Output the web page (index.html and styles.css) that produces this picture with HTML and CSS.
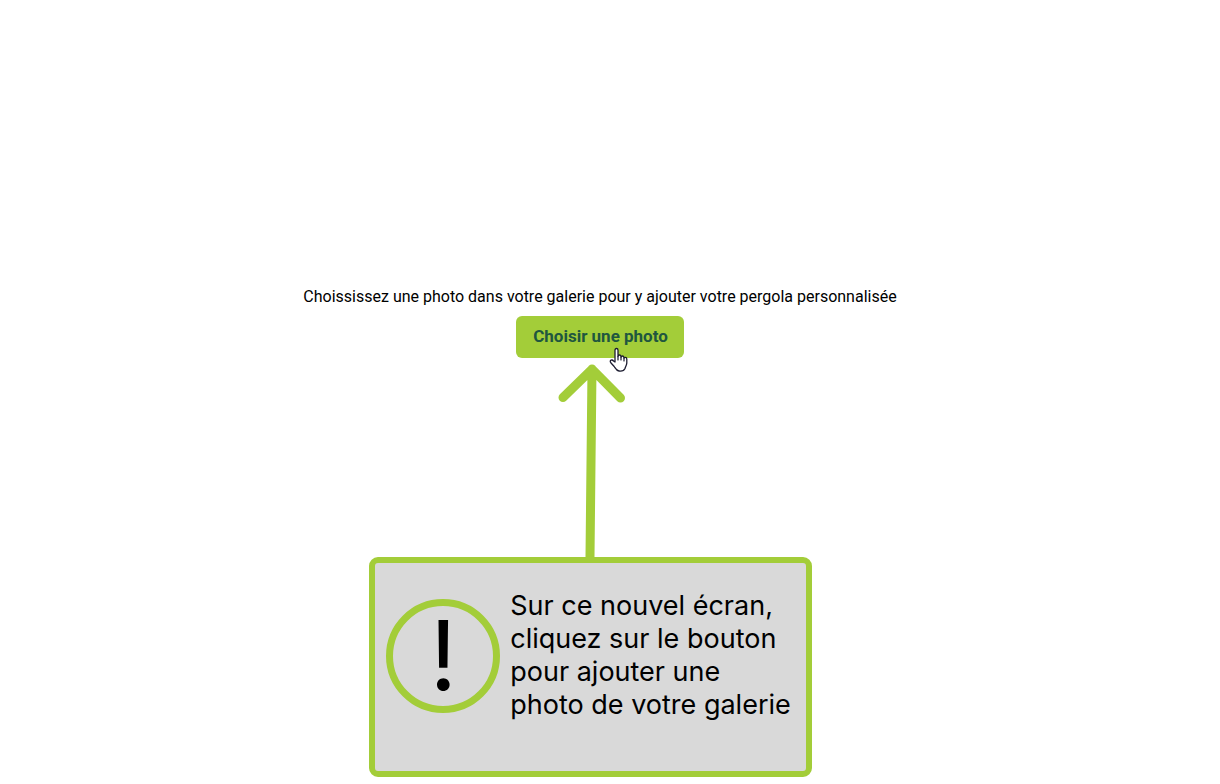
FILE: index.html
```html
<!DOCTYPE html>
<html lang="fr">
<head>
<meta charset="utf-8">
<meta name="viewport" content="width=device-width, initial-scale=1">
<title>Choisir une photo</title>
<link rel="stylesheet" href="styles.css">
</head>
<body>
<main class="page">
  <p class="intro">Choississez une photo dans votre galerie pour y ajouter votre pergola personnalisée</p>
  <div class="picker">
    <button class="choose" type="button">Choisir une photo</button>
    <svg class="cursor" width="20" height="26" viewBox="0 0 20 26" aria-hidden="true">
      <path d="M6 15V3.2Q6 1.5 7.5 1.5T9 3.2V9.500Q9 8 10.400 8T12 9.500V10Q12.200 9 13.400 9T15 10.500V11Q15.300 10.300 16.300 10.300Q17.800 10.300 17.800 12V16C17.800 18 16.500 19.500 16 21.500C15 24 12.500 24.300 10 24C7.500 23.800 6.500 21.500 5.200 19.500L2 16Q.5 13.800 2 13.200T4.500 14Z" fill="#fff" stroke="#1c1c30" stroke-width="1.300" stroke-linejoin="round"/>
      <path d="M9 9.500V13M12 10V13M15 11V14" fill="none" stroke="#1c1c30" stroke-width="1.200" stroke-linecap="round"/>
    </svg>
  </div>
  <section class="guide">
    <svg class="arrow" width="72" height="199" viewBox="0 0 72 199" aria-hidden="true">
      <path d="M37 11L35 199M8 39.500L37 11.200L65.500 40" fill="none" stroke="#a3cd39" stroke-width="9" stroke-linecap="round" stroke-linejoin="round"/>
    </svg>
    <div class="notice">
      <span class="mark">!</span>
      <p class="message">Sur ce nouvel écran,<br>cliquez sur le bouton<br>pour ajouter une<br>photo de votre galerie</p>
    </div>
  </section>
</main>
</body>
</html>
```
FILE: styles.css
```css
* {
  box-sizing: border-box;
}

body {
  margin: 0;
  background: #fff;
  color: #000;
  font-family: Roboto, "Liberation Sans", sans-serif;
}

.page {
  display: flex;
  flex-direction: column;
  align-items: center;
  padding: 285px 20px 7px 0;
}

.intro {
  margin: 0 0 7px;
  font-size: 16px;
  line-height: 24px;
  text-align: center;
}

.picker {
  position: relative;
}

.choose {
  display: block;
  padding: 8px 16px 10px 17px;
  border: 0;
  border-radius: 6px;
  background: #a3cd39;
  color: #20563f;
  font: bold 17px/24px Roboto, "Liberation Sans", sans-serif;
  cursor: pointer;
}

.cursor {
  position: absolute;
  right: 55px;
  bottom: -15px;
  pointer-events: none;
}

.guide {
  display: flex;
  flex-direction: column;
  align-items: center;
  padding-right: 19px;
}

.arrow {
  display: block;
}

.notice {
  display: flex;
  align-items: flex-start;
  gap: 10px;
  min-height: 220px;
  padding: 26px 15px 26px 11px;
  border: 6px solid #a3cd39;
  border-radius: 9px;
  background: #d9d9d9;
  font-family: Inter, "Liberation Sans", sans-serif;
}

.mark {
  display: flex;
  flex: none;
  align-items: center;
  justify-content: center;
  width: 114px;
  height: 114px;
  margin-top: 10px;
  padding-bottom: 2px;
  border: 7px solid #a3cd39;
  border-radius: 50%;
  font-size: 96px;
  line-height: 96px;
}

.message {
  margin: 0;
  font-size: 27px;
  line-height: 33px;
}
```
